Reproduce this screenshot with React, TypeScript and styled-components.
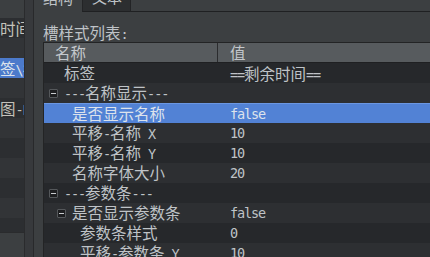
import React from "react";
import styled, { createGlobalStyle } from "styled-components";

const Global = createGlobalStyle`
  html, body { margin: 0; padding: 0; background: #3c3f41; overflow: hidden; }
  #root { width: 430px; height: 257px; }
`;

const Shell = styled.div`
  display: flex;
  width: 430px;
  height: 257px;
  overflow: hidden;
  background: #3c3f41;
  color: #bfc3c7;
`;

/* ---------- mixed CJK / latin text ---------- */
const Han = styled.span`
  font-family: "Noto Sans CJK SC", sans-serif;
  font-size: 15.5px;
`;
const Latin = styled.span`
  font-family: "DejaVu Sans Mono", monospace;
  font-size: 13.5px;
  letter-spacing: -1.1px;
  white-space: pre;
`;
const CJK_SPLIT = /([\u2E80-\u9FFF\uF900-\uFAFF\uFF00-\uFFEF]+)/;
const CJK_TEST = /^[\u2E80-\u9FFF\uF900-\uFAFF\uFF00-\uFFEF]+$/;
function Mixed({ text }: { text: string }) {
  const parts = text.split(CJK_SPLIT).filter((p) => p.length > 0);
  return (
    <>
      {parts.map((p, i) =>
        CJK_TEST.test(p) ? <Han key={i}>{p}</Han> : <Latin key={i}>{p}</Latin>
      )}
    </>
  );
}

/* ---------- left tree (scrolled) ---------- */
const LeftPane = styled.div`
  width: 24px;
  flex: none;
  display: flex;
  flex-direction: column;
  overflow: hidden;
  background: #3c3f41;
`;
const LeftTop = styled.div`
  height: 18px;
  flex: none;
`;
const LeftList = styled.div`
  height: 214px;
  flex: none;
  display: flex;
  flex-direction: column;
  overflow: hidden;
  border-bottom: 1px solid #2a2b2d;
`;
type Tone = "dark" | "light" | "sel";
const LeftRow = styled.div<{ $tone: Tone }>`
  height: 20px;
  flex: none;
  line-height: 20px;
  white-space: nowrap;
  overflow: hidden;
  background: ${(p) =>
    p.$tone === "sel" ? "#4c7acb" : p.$tone === "dark" ? "#2c2e31" : "#323437"};
  color: ${(p) => (p.$tone === "sel" ? "#dde3ec" : "#c4c2bb")};
`;

const Gutter = styled.div`
  width: 8px;
  flex: none;
  background: #37393c;
  border-left: 1px solid #2a2b2d;
  border-right: 1px solid #28292b;
`;

/* ---------- right pane ---------- */
const RightPane = styled.div`
  flex: 1;
  min-width: 0;
  display: flex;
  flex-direction: column;
`;
const TabBar = styled.div`
  display: flex;
  height: 12px;
  flex: none;
`;
const Tab = styled.div<{ $active?: boolean }>`
  display: flex;
  align-items: flex-end;
  overflow: hidden;
  box-sizing: border-box;
  height: 12px;
  padding-left: 9px;
  width: ${(p) => (p.$active ? "48px" : "49px")};
  background: ${(p) => (p.$active ? "#3c3f41" : "#2c2e30")};
  border-left: ${(p) => (p.$active ? "none" : "1px solid #232426")};
  border-right: ${(p) => (p.$active ? "none" : "1px solid #232426")};
  border-bottom: ${(p) => (p.$active ? "none" : "1px solid #1f2022")};
  color: #bfc3c7;
`;
const TabLabel = styled.span`
  font-family: "Noto Sans CJK SC", sans-serif;
  font-size: 15px;
  line-height: 15px;
  margin-bottom: 7px;
  white-space: nowrap;
`;
const TabFill = styled.div`
  flex: 1;
  border-bottom: 1px solid #1f2022;
`;

const Content = styled.div`
  flex: 1;
  padding-left: 9px;
  display: flex;
  flex-direction: column;
`;
const ListLabel = styled.div`
  margin-top: 10px;
  height: 20px;
  line-height: 20px;
  color: #bfc3c7;
  white-space: nowrap;
`;

const Table = styled.div`
  border-top: 1px solid #232425;
  border-left: 1px solid #232425;
  display: flex;
  flex-direction: column;
`;
const HeadRow = styled.div`
  display: flex;
  height: 19px;
  line-height: 19px;
  background: #575b5e;
  border-bottom: 1px solid #1f2022;
  color: #c4c8cc;
  white-space: nowrap;
`;
const HeadCell = styled.div<{ $first?: boolean }>`
  box-sizing: border-box;
  width: ${(p) => (p.$first ? "174px" : "auto")};
  flex: ${(p) => (p.$first ? "none" : "1")};
  padding-left: ${(p) => (p.$first ? "11px" : "12px")};
  border-right: ${(p) => (p.$first ? "1px solid #2b2c2e" : "none")};
`;

const Row = styled.div<{ $tone: Tone }>`
  display: flex;
  box-sizing: border-box;
  height: 20px;
  line-height: 20px;
  white-space: nowrap;
  background: ${(p) =>
    p.$tone === "sel" ? "#5282d5" : p.$tone === "dark" ? "#26282b" : "#2d2f32"};
  border-top: ${(p) => (p.$tone === "sel" ? "1px solid #6b97e2" : "none")};
  color: ${(p) => (p.$tone === "sel" ? "#dde3ec" : "#bfc3c7")};
`;
const NameCell = styled.div<{ $level: number }>`
  width: 174px;
  flex: none;
  box-sizing: border-box;
  display: flex;
  align-items: center;
  padding-left: ${(p) => 5 + p.$level * 8}px;
`;
const ToggleSlot = styled.div`
  width: 15px;
  flex: none;
  display: flex;
  align-items: center;
`;
const ToggleBox = styled.div`
  box-sizing: border-box;
  width: 9px;
  height: 9px;
  border: 1px solid #55585b;
  border-radius: 1px;
  background: #1d1e20;
  display: flex;
  align-items: center;
  justify-content: center;
  &::after {
    content: "";
    width: 5px;
    height: 1px;
    background: #c8cbce;
  }
`;
const ValueCell = styled.div`
  flex: 1;
  padding-left: 12px;
  color: inherit;
`;
const NameText = styled.span`
  line-height: 20px;
`;

type Item = { name: string; value: string; level: number; group?: boolean };
const items: Item[] = [
  { name: "标签", value: "==剩余时间==", level: 0 },
  { name: "---名称显示---", value: "", level: 0, group: true },
  { name: "是否显示名称", value: "false", level: 1 },
  { name: "平移-名称 X", value: "10", level: 1 },
  { name: "平移-名称 Y", value: "10", level: 1 },
  { name: "名称字体大小", value: "20", level: 1 },
  { name: "---参数条---", value: "", level: 0, group: true },
  { name: "是否显示参数条", value: "false", level: 1, group: true },
  { name: "参数条样式", value: "0", level: 2 },
  { name: "平移-参数条 Y", value: "10", level: 2 },
];
const SELECTED = 2;

const leftRows = ["时间", "", "签\\名称", "", "图-E", "", "", "", "", "", ""];

export default function App() {
  return (
    <>
      <Global />
      <Shell>
        <LeftPane>
          <LeftTop />
          <LeftList>
            {leftRows.map((t, i) => (
              <LeftRow key={i} $tone={i === 2 ? "sel" : i % 2 === 0 ? "dark" : "light"}>
                <Mixed text={t} />
              </LeftRow>
            ))}
          </LeftList>
        </LeftPane>
        <Gutter />
        <RightPane>
          <TabBar>
            <Tab $active>
              <TabLabel>结构</TabLabel>
            </Tab>
            <Tab>
              <TabLabel>文本</TabLabel>
            </Tab>
            <TabFill />
          </TabBar>
          <Content>
            <ListLabel>
              <Mixed text="槽样式列表:" />
            </ListLabel>
            <Table>
              <HeadRow>
                <HeadCell $first>
                  <Han>名称</Han>
                </HeadCell>
                <HeadCell>
                  <Han>值</Han>
                </HeadCell>
              </HeadRow>
              {items.map((it, i) => (
                <Row key={i} $tone={i === SELECTED ? "sel" : i % 2 === 0 ? "dark" : "light"}>
                  <NameCell $level={it.level}>
                    <ToggleSlot>{it.group ? <ToggleBox /> : null}</ToggleSlot>
                    <NameText>
                      <Mixed text={it.name} />
                    </NameText>
                  </NameCell>
                  <ValueCell>
                    <Mixed text={it.value} />
                  </ValueCell>
                </Row>
              ))}
            </Table>
          </Content>
        </RightPane>
      </Shell>
    </>
  );
}
